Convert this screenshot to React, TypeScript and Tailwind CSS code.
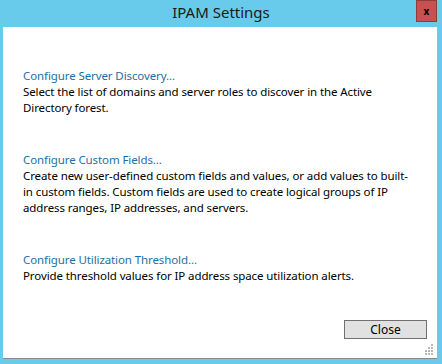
const font = { fontFamily: '"Noto Sans", "Open Sans", sans-serif' }

interface SectionProps {
  title: string
  lines: string[]
}

function Section({ title, lines }: SectionProps) {
  return (
    <div className="text-[11.5px] leading-[16px] tracking-[-0.1px] whitespace-nowrap">
      <div className="text-[#1e6fa5]">{title}</div>
      {lines.map((l, i) => (
        <div key={i} className="text-black">{l}</div>
      ))}
    </div>
  )
}

export default function App() {
  return (
    <div className="w-[442px] h-[364px] bg-[#69cbeb] flex flex-col overflow-hidden" style={font}>
      <div className="h-[27px] flex items-start relative">
        <div className="flex-1 text-center text-[15px] leading-[22px] text-[#1a1a1a] pt-[1px]">IPAM Settings</div>
        <div className="absolute right-[5px] top-0 w-[21px] h-[22px] bg-[#c75050] border border-[#8e3c3c] flex items-center justify-center text-[10px] font-bold text-black leading-none">x</div>
      </div>
      <div className="mx-[3px] mr-[5px] h-[332px] bg-white border-b border-[#8a8a8a] flex flex-col pl-[20px] pt-[41px] relative">
        <div className="flex flex-col gap-[36px]">
          <Section
            title="Configure Server Discovery..."
            lines={["Select the list of domains and server roles to discover in the Active", "Directory forest."]}
          />
          <Section
            title="Configure Custom Fields..."
            lines={[
              "Create new user-defined custom fields and values, or add values to built-",
              "in custom fields. Custom fields are used to create logical groups of IP",
              "address ranges, IP addresses, and servers.",
            ]}
          />
          <Section
            title="Configure Utilization Threshold..."
            lines={["Provide threshold values for IP address space utilization alerts."]}
          />
        </div>
        <div className="flex-1" />
        <div className="flex justify-end pr-[10px] pb-[19px]">
          <button className="w-[83px] h-[19px] bg-[#e1e1e1] border border-[#707070] text-[12px] leading-none text-black">Close</button>
        </div>
        <svg className="absolute right-[3px] bottom-[3px]" width="11" height="11" viewBox="0 0 11 11">
          {[[8, 0], [8, 3], [5, 3], [8, 6], [5, 6], [2, 6], [8, 9], [5, 9], [2, 9]].map(([x, y], i) => (
            <rect key={i} x={x} y={y} width="2" height="2" fill="#b8b8b8" />
          ))}
        </svg>
      </div>
    </div>
  )
}
